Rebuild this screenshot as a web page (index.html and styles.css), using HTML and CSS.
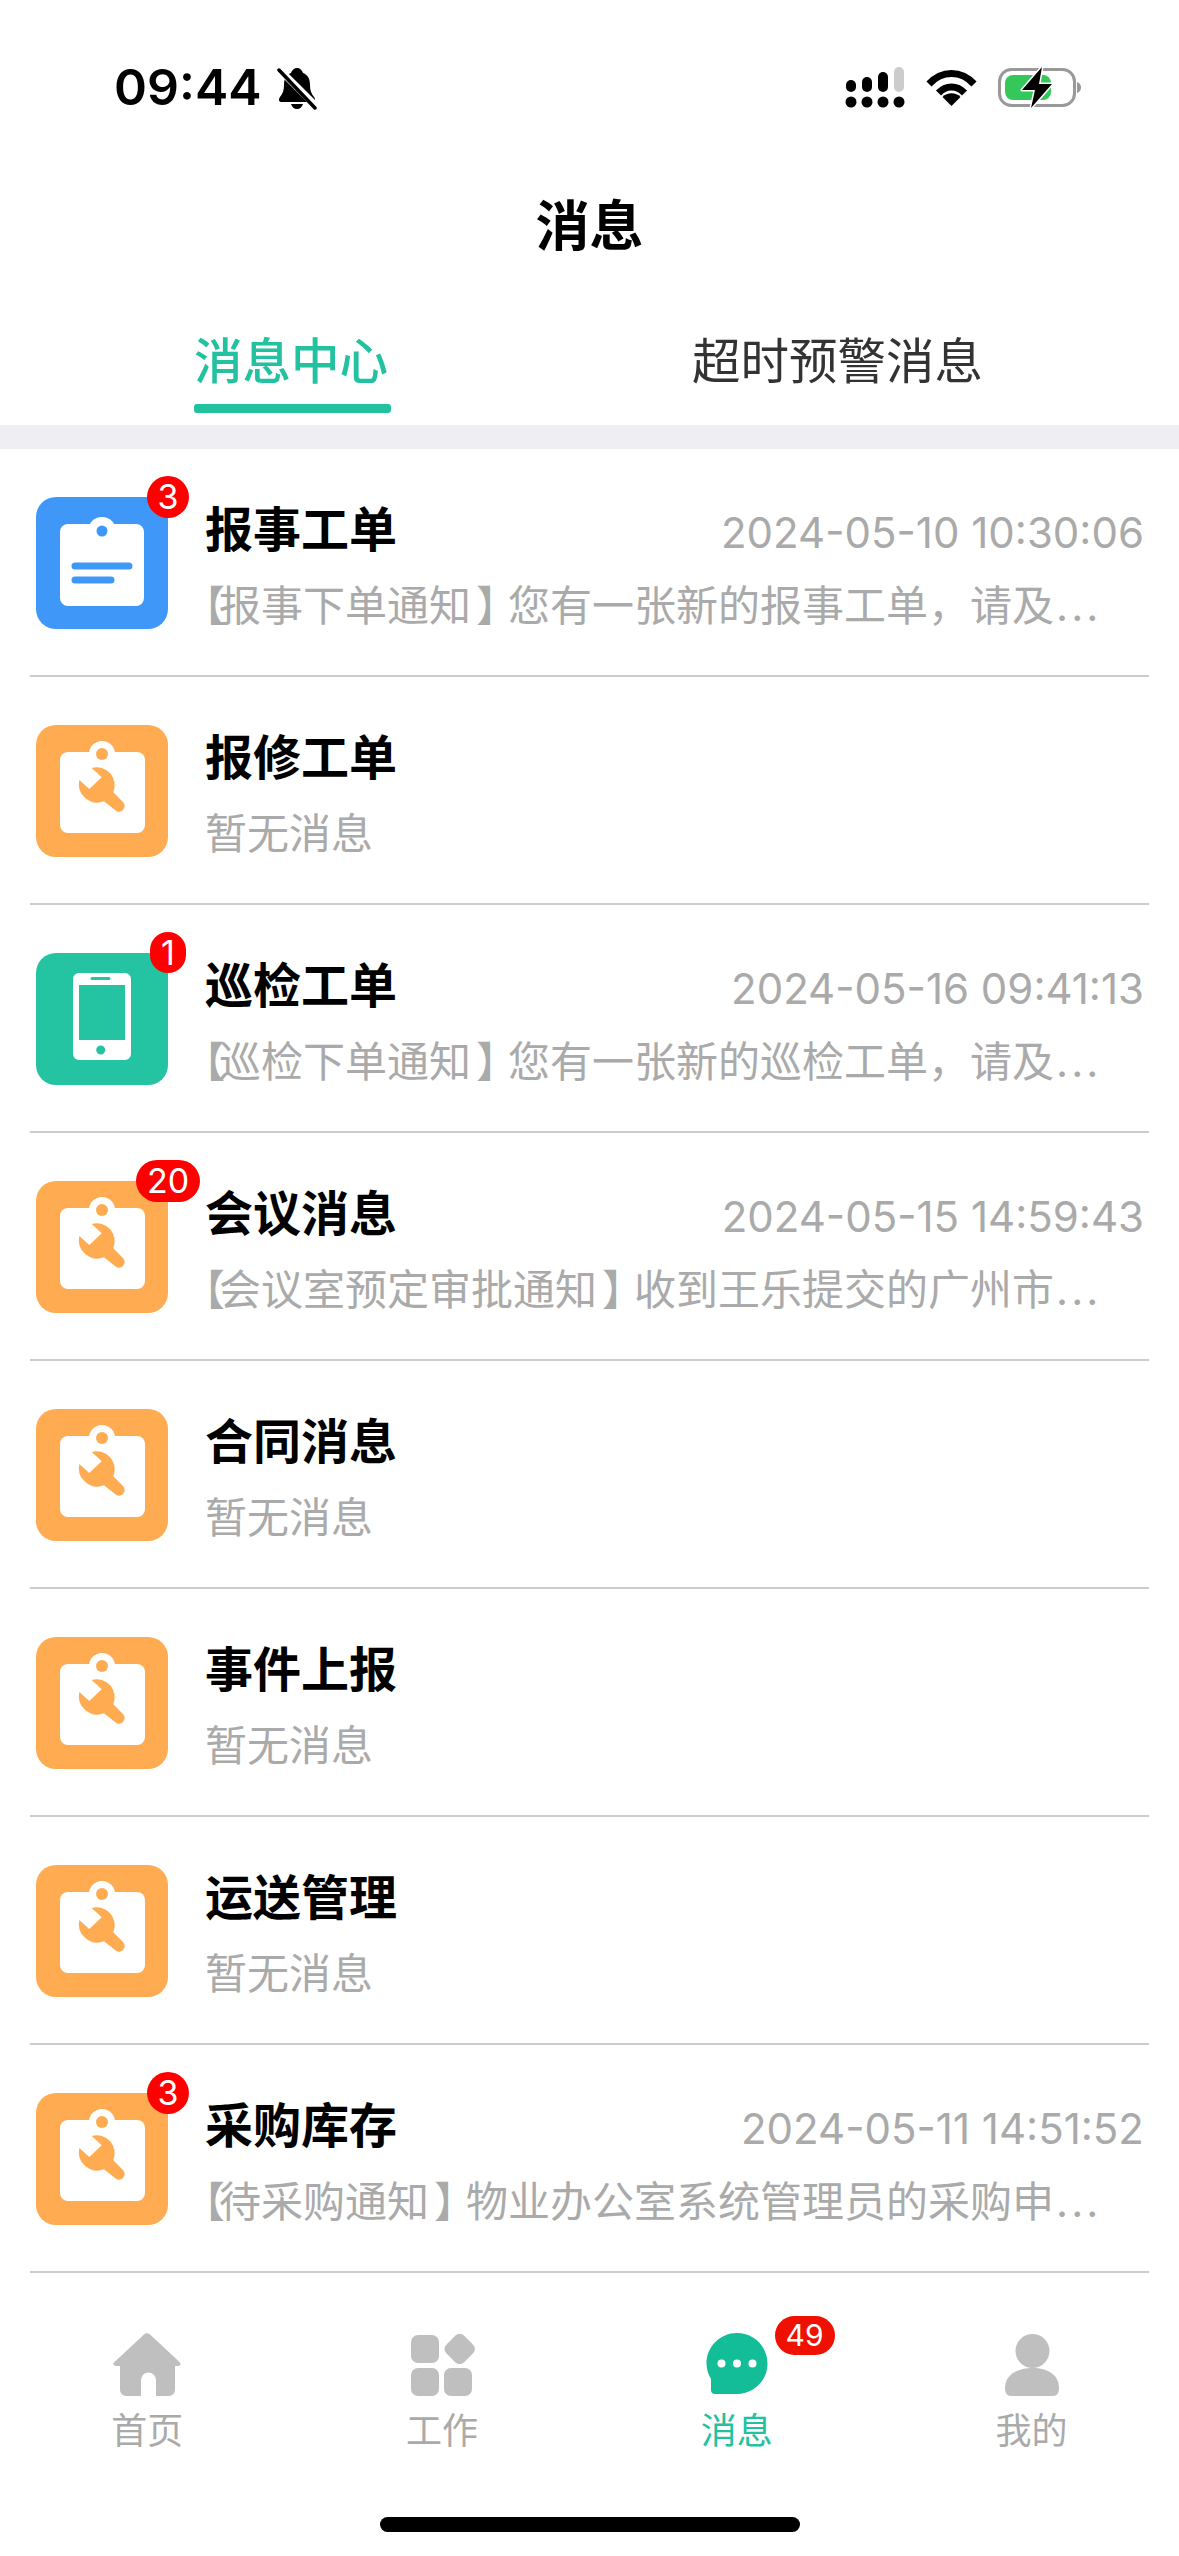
FILE: index.html
```html
<!DOCTYPE html>
<html lang="zh-CN">
<head>
<meta charset="utf-8">
<title>消息</title>
<link rel="stylesheet" href="styles.css">
</head>
<body>
<svg class="defs" width="0" height="0" aria-hidden="true">
  <symbol id="ic-wrench" viewBox="0 0 132 132">
    <rect x="24" y="27" width="85" height="81" rx="8" fill="#fff"/>
    <circle cx="66" cy="29" r="13" fill="#fff"/>
    <circle cx="66" cy="29" r="6" fill="#ffab52"/>
    <path fill="#ffab52" d="M55.7 43A18 18 0 0 1 77.3 67.3L87 77a5.6 5.6 0 0 1-8 8L68 76.3A18.5 18.5 0 0 1 43.3 55L53.3 64 65.7 52.3Z"/>
  </symbol>
  <symbol id="ic-clip" viewBox="0 0 132 132">
    <rect x="24" y="27" width="84" height="82" rx="8" fill="#fff"/>
    <circle cx="66" cy="34" r="14" fill="#fff"/>
    <circle cx="66" cy="34" r="5.5" fill="#3f98f7"/>
    <path d="M39 69H93M39 83H75" stroke="#3f98f7" stroke-width="7" stroke-linecap="round" fill="none"/>
  </symbol>
  <symbol id="ic-phone" viewBox="0 0 132 132">
    <path fill="#fff" fill-rule="evenodd" d="M43 20H89a6 6 0 0 1 6 6V101a6 6 0 0 1-6 6H43a6 6 0 0 1-6-6V26a6 6 0 0 1 6-6ZM43 32V87H89V32ZM56 24a1.500 1.500 0 0 0 0 3H73a1.500 1.500 0 0 0 0-3ZM64.700 92.500a4.500 4.500 0 1 0 0 9 4.500 4.500 0 0 0 0-9Z"/>
  </symbol>
</svg>

<div class="phone">
  <div class="status">
    <span class="time">09:44</span>
    <svg class="bell" width="40" height="43" viewBox="0 0 40 43">
      <path fill="#000" d="M20 1c3 0 5 2 6 5 5 2 7 6 7 12 0 5 1 8 4 12 2 3 1 5-2 5H5c-3 0-4-2-2-5 3-4 4-7 4-12 0-6 2-10 7-12 1-3 3-5 6-5ZM14 37h12c-1 3-3 5-6 5s-5-2-6-5Z"/>
      <path stroke="#fff" stroke-width="7" d="M0 0 40 40"/>
      <path stroke="#000" stroke-width="3.500" stroke-linecap="round" d="M2 3 38 41"/>
    </svg>
    <span class="status-gap"></span>
    <svg class="signal" width="60" height="41" viewBox="0 0 60 41">
      <rect x="1" y="13" width="10" height="12" rx="5"/>
      <rect x="17" y="10" width="10" height="15" rx="5"/>
      <rect x="33" y="5" width="10" height="20" rx="5"/>
      <rect x="49" y="0" width="10" height="25" rx="5" fill="#ccc"/>
      <circle cx="6" cy="35" r="5.500"/><circle cx="22" cy="35" r="5.500"/><circle cx="38" cy="35" r="5.500"/><circle cx="54" cy="35" r="5.500"/>
    </svg>
    <svg class="wifi" width="51" height="37" viewBox="0 0 51 37">
      <path fill="none" stroke="#000" stroke-width="7" d="M3 15C16 1 35 1 48 15M12.500 24C20 16 31 16 38.500 24"/>
      <path d="M25.500 37 16.500 28C21 23 30 23 34.500 28Z"/>
    </svg>
    <svg class="battery" width="83" height="41" viewBox="0 0 83 41">
      <rect x="1.500" y="2.500" width="75" height="36" rx="12" fill="none" stroke="#999" stroke-width="3"/>
      <rect x="7" y="8" width="46" height="25" rx="8" fill="#34c759"/>
      <path d="M79 15c3 1 4 3 4 5.500s-1 4.500-4 5.500Z" fill="#999"/>
      <path d="M44 0 24 23H37L33 41 54 17H41Z" fill="#000" stroke="#fff" stroke-width="3" stroke-linejoin="round" paint-order="stroke"/>
    </svg>
  </div>

  <h1 class="page-title">消息</h1>

  <div class="tabs">
    <div class="tab tab-active">消息中心</div>
    <div class="tab">超时预警消息</div>
  </div>

  <ul class="list">
    <li class="row">
      <div class="icon icon-blue"><svg class="glyph"><use href="#ic-clip"/></svg><span class="badge badge-a">3</span></div>
      <div class="body">
        <div class="line"><span class="name">报事工单</span><span class="stamp">2024-05-10 10:30:06</span></div>
        <div class="sub"><span class="lb">【</span>报事下单通知<span class="rb">】</span>您有一张新的报事工单，请及<span class="ell">...</span></div>
      </div>
    </li>
    <li class="row">
      <div class="icon icon-orange"><svg class="glyph"><use href="#ic-wrench"/></svg></div>
      <div class="body">
        <div class="line"><span class="name">报修工单</span></div>
        <div class="sub">暂无消息</div>
      </div>
    </li>
    <li class="row">
      <div class="icon icon-teal"><svg class="glyph"><use href="#ic-phone"/></svg><span class="badge badge-b">1</span></div>
      <div class="body">
        <div class="line"><span class="name">巡检工单</span><span class="stamp">2024-05-16 09:41:13</span></div>
        <div class="sub"><span class="lb">【</span>巡检下单通知<span class="rb">】</span>您有一张新的巡检工单，请及<span class="ell">...</span></div>
      </div>
    </li>
    <li class="row">
      <div class="icon icon-orange"><svg class="glyph"><use href="#ic-wrench"/></svg><span class="badge badge-c">20</span></div>
      <div class="body">
        <div class="line"><span class="name">会议消息</span><span class="stamp">2024-05-15 14:59:43</span></div>
        <div class="sub"><span class="lb">【</span>会议室预定审批通知<span class="rb">】</span>收到王乐提交的广州市<span class="ell">...</span></div>
      </div>
    </li>
    <li class="row">
      <div class="icon icon-orange"><svg class="glyph"><use href="#ic-wrench"/></svg></div>
      <div class="body">
        <div class="line"><span class="name">合同消息</span></div>
        <div class="sub">暂无消息</div>
      </div>
    </li>
    <li class="row">
      <div class="icon icon-orange"><svg class="glyph"><use href="#ic-wrench"/></svg></div>
      <div class="body">
        <div class="line"><span class="name">事件上报</span></div>
        <div class="sub">暂无消息</div>
      </div>
    </li>
    <li class="row">
      <div class="icon icon-orange"><svg class="glyph"><use href="#ic-wrench"/></svg></div>
      <div class="body">
        <div class="line"><span class="name">运送管理</span></div>
        <div class="sub">暂无消息</div>
      </div>
    </li>
    <li class="row">
      <div class="icon icon-orange"><svg class="glyph"><use href="#ic-wrench"/></svg><span class="badge badge-a">3</span></div>
      <div class="body">
        <div class="line"><span class="name">采购库存</span><span class="stamp">2024-05-11 14:51:52</span></div>
        <div class="sub"><span class="lb">【</span>待采购通知<span class="rb">】</span>物业办公室系统管理员的采购申<span class="ell">...</span></div>
      </div>
    </li>
  </ul>

  <nav class="nav">
    <div class="nav-item">
      <svg class="nav-icon" viewBox="0 0 68 64">
        <path fill="#bfbfbf" d="M31 1.500a4 4 0 0 1 6 0L66.500 29c2 2 1 4-1.500 4H62V57a6 6 0 0 1-6 6H43V47a7.500 7.500 0 0 0-15 0V63H13a6 6 0 0 1-6-6V33H3c-2.500 0-3.500-2-1.500-4Z"/>
      </svg>
      <span class="nav-label">首页</span>
    </div>
    <div class="nav-item">
      <svg class="nav-icon" viewBox="0 0 68 64">
        <g fill="#bfbfbf">
          <rect x="3" y="2" width="28" height="28" rx="7"/>
          <rect x="3" y="35" width="28" height="28" rx="7"/>
          <rect x="36" y="35" width="28" height="28" rx="7"/>
          <rect x="39" y="3" width="25" height="25" rx="6" transform="rotate(45 51 16)"/>
        </g>
      </svg>
      <span class="nav-label">工作</span>
    </div>
    <div class="nav-item nav-active">
      <svg class="nav-icon" viewBox="0 0 68 64">
        <path fill="#13bd98" d="M34 0C51 0 64.500 13.500 64.500 30.500S51 61 34 61H12a4 4 0 0 1-4-4V46C5 41 3.500 36 3.500 30.500 3.500 13.500 17 0 34 0Z"/>
        <circle cx="18.500" cy="30.500" r="4" fill="#fff"/><circle cx="34" cy="30.500" r="4" fill="#fff"/><circle cx="49.500" cy="30.500" r="4" fill="#fff"/>
      </svg>
      <span class="nav-label">消息</span>
      <span class="nav-badge">49</span>
    </div>
    <div class="nav-item">
      <svg class="nav-icon" viewBox="0 0 68 64">
        <circle cx="34.500" cy="18" r="17" fill="#bfbfbf"/>
        <path fill="#bfbfbf" d="M7 55C7 42 19 35 34.500 35S61 42 61 55c0 5-2 8-6 8H13c-4 0-6-3-6-8Z"/>
      </svg>
      <span class="nav-label">我的</span>
    </div>
  </nav>
  <div class="home-bar"></div>
</div>
</body>
</html>
```
FILE: styles.css
```css
* { box-sizing: border-box; }
html, body { margin: 0; padding: 0; background: #fff; }
body { font-family: Inter, "Noto Sans CJK SC", sans-serif; }
.defs { position: absolute; }
.phone { width: 1179px; height: 2556px; display: flex; flex-direction: column; overflow: hidden; }

.status { height: 174px; display: flex; align-items: flex-start; padding: 62px 0 0 114px; }
.time { font-size: 50px; font-weight: 600; line-height: 50px; color: #000; }
.bell { margin: 5px 0 0 15px; }
.status-gap { flex: 1; }
.signal { margin: 5px 0 0 0; }
.wifi { margin: 7px 0 0 21px; }
.battery { margin: 5px 98px 0 21px; }

.page-title { margin: 0; height: 100px; padding-top: 3px; font-size: 54px; line-height: 100px; font-weight: 700; text-align: center; color: #000; }

.tabs { height: 151px; display: flex; padding: 57px 0 0 194px; gap: 304px; }
.tab { position: relative; font-size: 48.5px; line-height: 62px; font-weight: 400; color: #333; height: 94px; }
.tab-active { color: #22c2a0; font-weight: 500; }
.tab-active::after { content: ""; position: absolute; left: 0; bottom: 12px; width: 197px; height: 9px; border-radius: 3px; background: #22c2a0; }

.list { list-style: none; margin: 0; padding: 0; border-top: 24px solid #eeeef3; }
.row { height: 228px; padding: 48px 38px 0 36px; display: flex; gap: 37px; align-items: flex-start; position: relative; }
.row::after { content: ""; position: absolute; left: 30px; right: 30px; bottom: 0; height: 2px; background: #ccc; }

.icon { width: 132px; height: 132px; flex: none; border-radius: 20px; position: relative; }
.icon-blue { background: #3f98f7; }
.icon-orange { background: #ffab52; }
.icon-teal { background: #24c3a2; }
.glyph { display: block; width: 132px; height: 132px; }

.badge { position: absolute; background: #f00; color: #fff; font-size: 34px; text-align: center; }
.badge-a { left: 111px; top: -21px; width: 42px; height: 42px; line-height: 42px; border-radius: 21px; }
.badge-b { left: 114px; top: -21px; width: 36px; height: 41px; line-height: 41px; border-radius: 18px; }
.badge-c { left: 100px; top: -21px; width: 64px; height: 42px; line-height: 42px; border-radius: 21px; }

.body { flex: 1; min-width: 0; padding: 3px 0 0; }
.line { display: flex; justify-content: space-between; align-items: flex-start; height: 60px; margin-right: -3px; }
.name { font-size: 48px; font-weight: 700; line-height: 60px; color: #000; }
.stamp { font-size: 42px; line-height: 60px; margin-top: 3px; color: #aaa; }
.sub { margin-top: 16px; font-size: 42px; line-height: 60px; color: #aaa; white-space: nowrap; }
.lb { margin-left: -22px; letter-spacing: -6px; }
.rb { margin-left: 5px; letter-spacing: -10px; }
.ell { letter-spacing: 3px; margin-left: 2px; }

.nav { flex: 1; display: grid; grid-template-columns: repeat(4, 1fr); align-items: start; }
.nav-item { position: relative; display: flex; flex-direction: column; align-items: center; padding-top: 60px; }
.nav-icon { display: block; width: 68px; height: 64px; }
.nav-label { margin-top: 10px; font-size: 36px; line-height: 48px; color: #aaa; }
.nav-active .nav-label { color: #22c2a0; }
.nav-badge { position: absolute; left: 185px; top: 43px; width: 60px; height: 39px; border-radius: 20px; background: #f01000; color: #fff; font-size: 30px; line-height: 39px; text-align: center; }

.home-bar { position: absolute; left: 380px; top: 2517px; width: 420px; height: 15px; border-radius: 8px; background: #000; }
```
